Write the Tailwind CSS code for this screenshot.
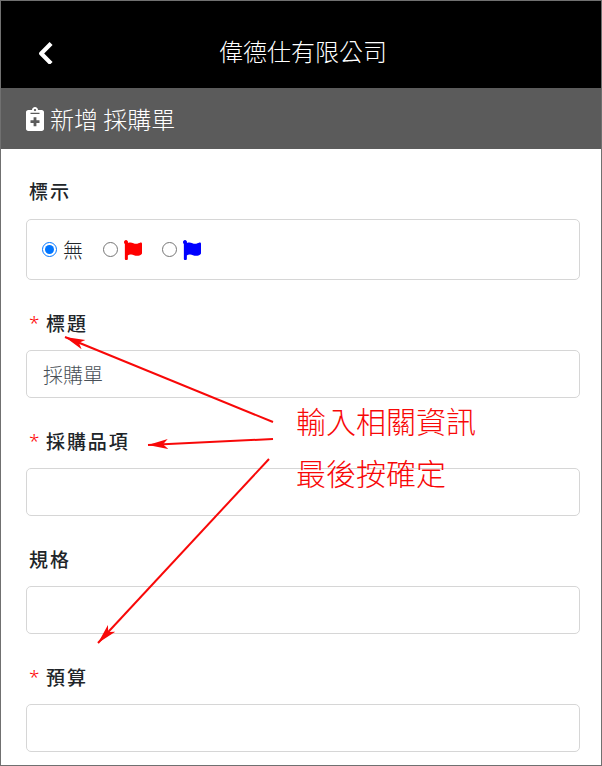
<!DOCTYPE html>
<html lang="zh-Hant">
<head>
<meta charset="utf-8">
<meta name="viewport" content="width=device-width, initial-scale=1">
<title>新增 採購單</title>
<script src="https://cdn.jsdelivr.net/npm/@tailwindcss/browser@4"></script>
</head>
<body class="bg-white font-['Noto_Sans_CJK_TC',sans-serif] text-[#212529]">
<div class="relative min-h-screen border border-[#707070]">
  <header class="grid grid-cols-[64px_1fr_60px] items-center bg-black pt-[30px] pb-[18px] text-white">
    <button type="button" aria-label="返回" class="ml-[30px] flex h-[39px] w-7 items-center justify-center pt-1">
      <svg class="h-[22px] w-4" viewBox="0 0 16 22" aria-hidden="true"><path d="M12.600 3 L4.200 11.500 L12.600 20" fill="none" stroke="#fff" stroke-width="4.200" stroke-linecap="square" stroke-linejoin="round"/></svg>
    </button>
    <h1 class="text-center text-2xl leading-[39px] font-light">偉德仕有限公司</h1>
  </header>
  <div class="flex items-center gap-1.5 bg-[#5b5b5b] px-[25px] py-3 text-white">
    <svg class="h-6 w-[18px]" viewBox="0 0 384 512" aria-hidden="true"><path fill="#fff" fill-rule="evenodd" d="M336 64h-80c0-35.300-28.700-64-64-64s-64 28.700-64 64H48C21.500 64 0 85.500 0 112v352c0 26.500 21.500 48 48 48h288c26.500 0 48-21.500 48-48V112c0-26.500-21.500-48-48-48zM192 40c13.300 0 24 10.700 24 24s-10.700 24-24 24-24-10.700-24-24 10.700-24 24-24zM96 124h192v24H96zM162 216h60v66h66v60h-66v66h-60v-66h-66v-60h66z"/></svg>
    <h2 class="text-2xl leading-[37px] font-light">新增 採購單</h2>
  </div>
  <form class="flex flex-col gap-[29px] pt-7 pr-[21px] pb-3 pl-[25px]">
    <fieldset>
      <legend class="mb-[14px] px-[3px] text-[19px] leading-7 font-medium tracking-widest">標示</legend>
      <div class="flex h-[61px] items-center rounded-[5px] border border-[#d6d6d6] px-[15px]">
        <label class="mr-5 flex items-center gap-1.5 text-xl font-light"><input type="radio" name="flag" checked class="size-[15px] accent-[#0075ff]">無</label>
        <label class="mr-5 flex items-center gap-1.5"><input type="radio" name="flag" aria-label="紅旗" class="size-[15px] accent-[#0075ff]">
          <svg class="h-5 w-[18px]" viewBox="8 0 504 512" preserveAspectRatio="none" aria-hidden="true"><path fill="#f00" d="M349.565 98.783C295.978 98.783 251.721 64 184.348 64c-24.955 0-47.309 4.384-68.045 12.013a55.947 55.947 0 0 0 3.586-23.562C118.117 24.015 94.806 1.206 66.338.048 34.345-1.254 8 24.296 8 56c0 19.026 9.497 35.825 24 45.945V488c0 13.255 10.745 24 24 24h36c13.255 0 24-10.745 24-24v-94.400c28.311-12.064 43.582-22.122 94.435-22.122 53.588 0 97.844 34.783 165.217 34.783 48.169 0 86.667-16.294 122.505-40.858C506.840 359.452 512 349.571 512 339.045v-243.100c0-23.393-24.269-38.870-45.485-29.016-34.338 15.948-76.454 31.854-116.950 31.854z"/></svg></label>
        <label class="flex items-center gap-1.5"><input type="radio" name="flag" aria-label="藍旗" class="size-[15px] accent-[#0075ff]">
          <svg class="h-5 w-[18px]" viewBox="8 0 504 512" preserveAspectRatio="none" aria-hidden="true"><path fill="#00f" d="M349.565 98.783C295.978 98.783 251.721 64 184.348 64c-24.955 0-47.309 4.384-68.045 12.013a55.947 55.947 0 0 0 3.586-23.562C118.117 24.015 94.806 1.206 66.338.048 34.345-1.254 8 24.296 8 56c0 19.026 9.497 35.825 24 45.945V488c0 13.255 10.745 24 24 24h36c13.255 0 24-10.745 24-24v-94.400c28.311-12.064 43.582-22.122 94.435-22.122 53.588 0 97.844 34.783 165.217 34.783 48.169 0 86.667-16.294 122.505-40.858C506.840 359.452 512 349.571 512 339.045v-243.100c0-23.393-24.269-38.870-45.485-29.016-34.338 15.948-76.454 31.854-116.950 31.854z"/></svg></label>
      </div>
    </fieldset>
    <div class="flex flex-col gap-[13px]">
      <label for="subject" class="flex px-[3px] text-[19px] leading-7 font-medium tracking-widest"><span class="w-[17px] font-['Noto_Sans',sans-serif] font-light text-[#f00]">*</span>標題</label>
      <input id="subject" type="text" value="採購單" class="h-12 w-full rounded-[5px] border border-[#d6d6d6] px-4 text-xl font-light text-[#495057]">
    </div>
    <div class="flex flex-col gap-[13px]">
      <label for="items" class="flex px-[3px] text-[19px] leading-7 font-medium tracking-widest"><span class="w-[17px] font-['Noto_Sans',sans-serif] font-light text-[#f00]">*</span>採購品項</label>
      <input id="items" type="text" class="h-12 w-full rounded-[5px] border border-[#d6d6d6] px-4 text-xl font-light text-[#495057]">
    </div>
    <div class="flex flex-col gap-[13px]">
      <label for="spec" class="px-[3px] text-[19px] leading-7 font-medium tracking-widest">規格</label>
      <input id="spec" type="text" class="h-12 w-full rounded-[5px] border border-[#d6d6d6] px-4 text-xl font-light text-[#495057]">
    </div>
    <div class="flex flex-col gap-[13px]">
      <label for="budget" class="flex px-[3px] text-[19px] leading-7 font-medium tracking-widest"><span class="w-[17px] font-['Noto_Sans',sans-serif] font-light text-[#f00]">*</span>預算</label>
      <input id="budget" type="text" class="h-12 w-full rounded-[5px] border border-[#d6d6d6] px-4 text-xl font-light text-[#495057]">
    </div>
  </form>
  <!-- Callout arrows and note over the form -->
  <svg class="pointer-events-none absolute top-[329px] left-[59px] h-[320px] w-[220px]" viewBox="60 330 220 320" aria-hidden="true">
    <defs><marker id="head" viewBox="0 0 20 12" refX="20" refY="6" markerWidth="20" markerHeight="12" markerUnits="userSpaceOnUse" orient="auto"><path d="M20 6 L0 1 L5 6 L0 11 Z" fill="#f80808"/></marker></defs>
    <g stroke="#f80808" stroke-width="2" fill="none">
      <path d="M273 422 L65 337" marker-end="url(#head)"/>
      <path d="M273 439 L148 445" marker-end="url(#head)"/>
      <path d="M269 459 L98 643" marker-end="url(#head)"/>
    </g>
  </svg>
  <p class="pointer-events-none absolute top-[393px] left-[295px] text-3xl leading-[52px] font-light text-[#f80808]">輸入相關資訊<br>最後按確定</p>
</div>
</body>
</html>
